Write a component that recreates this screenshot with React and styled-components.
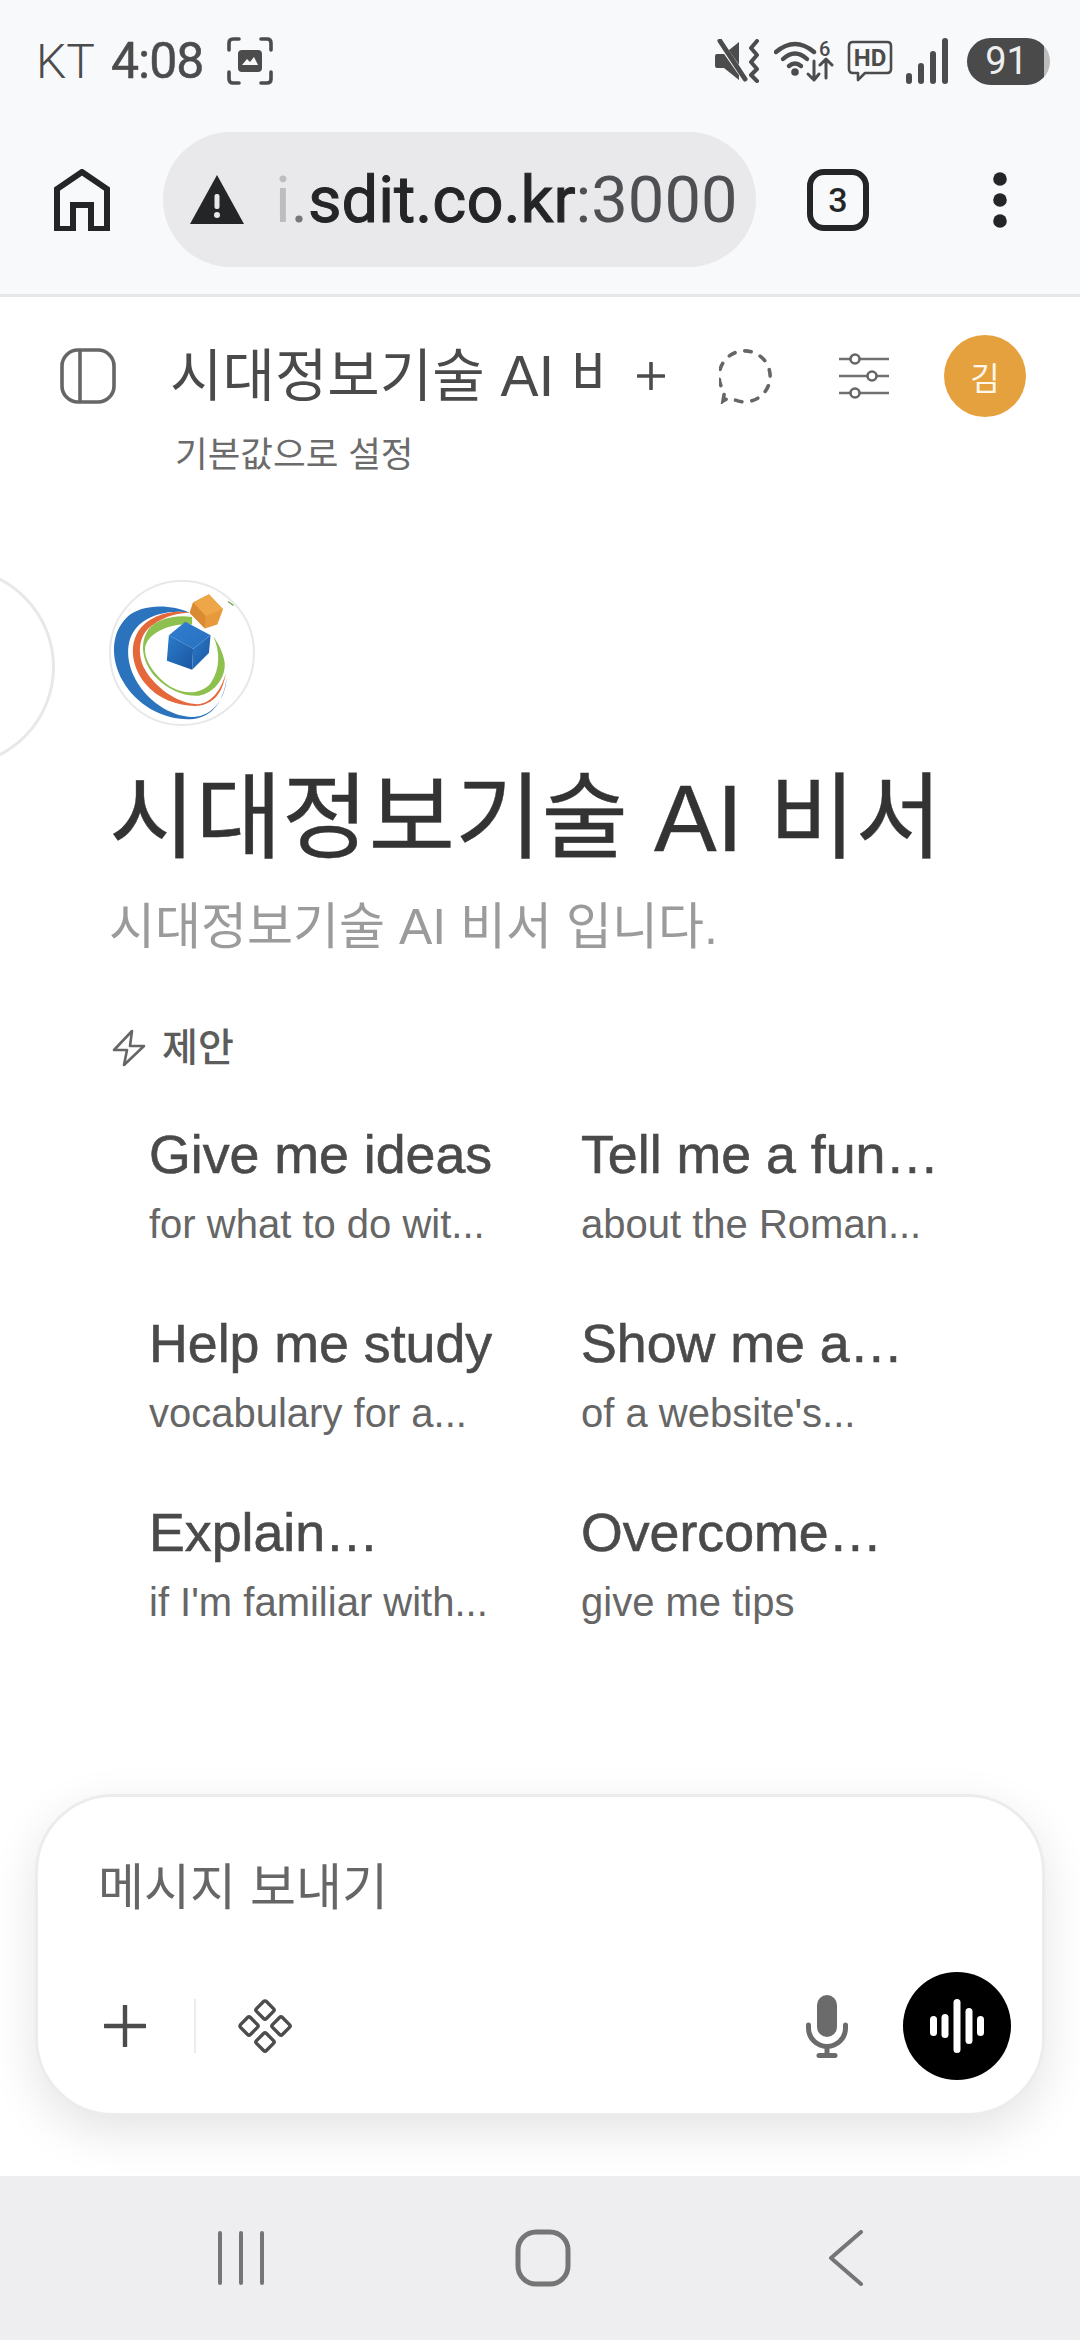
import React from 'react';
import styled, { createGlobalStyle } from 'styled-components';

const GlobalStyle = createGlobalStyle`
  * { box-sizing: border-box; }
  html, body { margin: 0; padding: 0; background: #fff; }
  body { font-family: "Liberation Sans", "Noto Sans CJK KR", sans-serif; }
`;

const suggestions = [
  { title: 'Give me ideas', sub: 'for what to do wit...' },
  { title: 'Tell me a fun…', sub: 'about the Roman...' },
  { title: 'Help me study', sub: 'vocabulary for a...' },
  { title: 'Show me a…', sub: "of a website's..." },
  { title: 'Explain…', sub: "if I'm familiar with..." },
  { title: 'Overcome…', sub: 'give me tips' },
];

const Logo = () => (
  <svg width="146" height="146" viewBox="118 58 434 434">
    <defs>
      <linearGradient id="blueTop" x1="0" y1="0" x2="1" y2="1">
        <stop offset="0" stopColor="#2f7fce" />
        <stop offset="1" stopColor="#2a6fc0" />
      </linearGradient>
      <linearGradient id="blueSide" x1="0" y1="0" x2="1" y2="1">
        <stop offset="0" stopColor="#2a7ccb" />
        <stop offset="1" stopColor="#1b559f" />
      </linearGradient>
    </defs>
    <circle cx="335" cy="275" r="214" fill="#fff" stroke="#e8e8e8" strokeWidth="6" />
    <path d="M358 155 C300 130 215 128 170 170 C125 215 120 290 160 360 C200 430 280 475 360 472 C420 468 455 430 468 350 C462 415 425 462 370 465 C310 468 225 420 190 340 C165 280 170 220 215 185 C255 155 310 148 358 155 Z" fill="#2b74bd" />
    <path d="M358 155 C300 145 235 165 205 210 C175 260 190 320 225 365 C265 415 330 435 385 432 C425 425 455 400 465 335 C450 390 420 425 380 427 C320 425 250 375 220 315 C200 265 210 215 250 190 C285 165 325 155 358 155 Z" fill="#e4683a" />
    <path d="M365 168 C310 160 260 175 235 205 C205 250 220 310 260 350 C295 385 345 405 385 402 C430 395 465 350 462 305 C458 275 445 250 428 225 C448 270 450 320 420 365 C395 395 350 400 310 380 C265 355 225 305 225 265 C225 225 285 185 365 190 Z" fill="#8dc04e" />
    <polygon points="415,100 457,145 440,190 403,202 358,155 368,125" fill="#e79a3c" />
    <polygon points="415,100 457,145 405,165 368,125" fill="#eda648" />
    <polygon points="358,155 368,125 405,165 403,202" fill="#d98a33" />
    <polygon points="345,182 420,222 368,262 296,222" fill="url(#blueTop)" />
    <polygon points="296,222 368,262 365,325 290,298" fill="url(#blueSide)" />
    <polygon points="420,222 415,275 365,325 368,262" fill="url(#blueSide)" />
    <path d="M472 122 L488 134" stroke="#6aa84f" strokeWidth="4" />
  </svg>
);

const App = () => (
  <Page>
    <GlobalStyle />
    <Chrome>
      <StatusBar>
        <StatusLeft>
          <Carrier>KT</Carrier>
          <Clock>4:08</Clock>
          <svg width="46" height="48" viewBox="0 0 46 48" fill="none">
            <path d="M2 13 V6 Q2 2 6 2 H12 M34 2 H40 Q44 2 44 6 V13 M44 35 V42 Q44 46 40 46 H34 M12 46 H6 Q2 46 2 42 V35" stroke="#4c4c4c" strokeWidth="3.6" strokeLinecap="round" />
            <rect x="11" y="13" width="24" height="22" rx="4" fill="#4c4c4c" />
            <path d="M15 28 L20 22 L23 25 L27 20 L31 28 Z" fill="#f8f9fb" />
          </svg>
        </StatusLeft>
        <StatusRight>
          <svg width="47" height="44" viewBox="0 0 47 44" fill="none">
            <path d="M1 17 Q1 15 3 15 H10 L25 3 V41 L10 29 H3 Q1 29 1 27 Z" fill="#4c4c4c" />
            <path d="M4 1 L32 41" stroke="#f8f9fb" strokeWidth="6" />
            <path d="M6 2 L31 40" stroke="#4c4c4c" strokeWidth="5" strokeLinecap="round" />
            <path d="M43 2 L37 9 L43 16 L37 23 L43 30 L37 36 L43 42" stroke="#4c4c4c" strokeWidth="4" strokeLinecap="round" strokeLinejoin="round" />
          </svg>
          <svg width="60" height="44" viewBox="0 0 60 44" fill="none">
            <path d="M2 13 Q21 -3 40 13" stroke="#4c4c4c" strokeWidth="4.4" strokeLinecap="round" />
            <path d="M9 20 Q21 9 33 20" stroke="#4c4c4c" strokeWidth="4.4" strokeLinecap="round" />
            <path d="M15 27 Q21 22 27 27" stroke="#4c4c4c" strokeWidth="4.4" strokeLinecap="round" />
            <circle cx="21" cy="33" r="3.8" fill="#4c4c4c" />
            <WifiDigit x="45" y="17">6</WifiDigit>
            <path d="M40 22 V41 M34 35 L40 41 L45 35" stroke="#4c4c4c" strokeWidth="3" strokeLinecap="round" strokeLinejoin="round" />
            <path d="M52 39 V20 M46 26 L52 20 L58 26" stroke="#4c4c4c" strokeWidth="3" strokeLinecap="round" strokeLinejoin="round" />
          </svg>
          <svg width="46" height="42" viewBox="0 0 46 42" fill="none">
            <path d="M6 2 H40 Q44 2 44 6 V29 Q44 33 40 33 H18 L11 40 V33 H6 Q2 33 2 29 V6 Q2 2 6 2 Z" stroke="#4c4c4c" strokeWidth="2.6" strokeLinejoin="round" />
            <HdMark x="23" y="26">HD</HdMark>
          </svg>
          <svg width="42" height="46" viewBox="0 0 42 46">
            <rect x="0" y="35" width="6" height="11" rx="3" fill="#4c4c4c" />
            <rect x="12" y="25" width="6" height="21" rx="3" fill="#4c4c4c" />
            <rect x="24" y="13" width="6" height="33" rx="3" fill="#4c4c4c" />
            <rect x="36" y="0" width="6" height="46" rx="3" fill="#4c4c4c" />
          </svg>
          <Battery>91</Battery>
        </StatusRight>
      </StatusBar>
      <ToolBar>
        <svg width="56" height="62" viewBox="0 0 56 62" fill="none">
          <path d="M3 60 V20 L28 3 L53 20 V60 H37 V36 H19 V60 Z" stroke="#242527" strokeWidth="6" />
        </svg>
        <UrlPill>
          <svg width="54" height="49" viewBox="0 0 54 49">
            <path d="M27 0 L54 49 H0 Z" fill="#242527" />
            <rect x="24.5" y="19" width="5" height="15" rx="2" fill="#e9e9eb" />
            <circle cx="27" cy="40" r="3" fill="#e9e9eb" />
          </svg>
          <UrlText>
            <UrlFade>i</UrlFade>
            <UrlDot>.</UrlDot>
            <UrlHost>sdit.co.kr</UrlHost>
            <UrlPort>:3000</UrlPort>
          </UrlText>
        </UrlPill>
        <TabCount>3</TabCount>
        <svg width="16" height="56" viewBox="0 0 16 56">
          <circle cx="8" cy="7" r="6.8" fill="#242527" />
          <circle cx="8" cy="28" r="6.8" fill="#242527" />
          <circle cx="8" cy="49" r="6.8" fill="#242527" />
        </svg>
      </ToolBar>
    </Chrome>

    <Main>
      <EdgeCircle />
      <HeaderRow>
        <PanelIcon>
          <svg width="56" height="56" viewBox="0 0 56 56" fill="none">
            <rect x="2" y="2" width="52" height="52" rx="16" stroke="#666" strokeWidth="3.6" />
            <path d="M20 2 V54" stroke="#666" strokeWidth="3.6" />
          </svg>
        </PanelIcon>
        <ModelTitle>시대정보기술 AI 비서</ModelTitle>
        <HeaderPlus>
          <svg width="28" height="28" viewBox="0 0 28 28">
            <path d="M14 1 V27 M1 14 H27" stroke="#4c4c4c" strokeWidth="3.6" strokeLinecap="round" />
          </svg>
        </HeaderPlus>
        <HeaderIcons>
          <svg width="56" height="56" viewBox="0 0 56 56" fill="none">
            <path d="M4 53 L5.5 44 A25.5 25.5 0 1 1 13 50.5 Q8 50 4 53 Z" stroke="#666" strokeWidth="3.6" strokeDasharray="6.5 10" strokeLinecap="round" />
          </svg>
          <svg width="50" height="46" viewBox="0 0 50 46" fill="none">
            <path d="M0 6 H50 M0 23 H50 M0 40 H50" stroke="#707070" strokeWidth="2.6" />
            <circle cx="16" cy="6" r="4.5" fill="#fff" stroke="#666" strokeWidth="2.6" />
            <circle cx="33" cy="23" r="4.5" fill="#fff" stroke="#666" strokeWidth="2.6" />
            <circle cx="16" cy="40" r="4.5" fill="#fff" stroke="#666" strokeWidth="2.6" />
          </svg>
          <Avatar>김</Avatar>
        </HeaderIcons>
      </HeaderRow>
      <SetDefault>기본값으로 설정</SetDefault>

      <Welcome>
        <Logo />
        <BigTitle>시대정보기술 AI 비서</BigTitle>
        <BigSub>시대정보기술 AI 비서 입니다.</BigSub>
        <SuggestLabel>
          <svg width="34" height="38" viewBox="-2 -2 34 38" fill="none">
            <path d="M18 0 L0 19 H13 L10 34 L30 15 H16 Z" stroke="#666" strokeWidth="2.6" strokeLinejoin="round" />
          </svg>
          제안
        </SuggestLabel>
      </Welcome>

      <SuggestGrid>
        {suggestions.map((item) => (
          <SuggestCard key={item.title}>
            <SuggestTitle>{item.title}</SuggestTitle>
            <SuggestSub>{item.sub}</SuggestSub>
          </SuggestCard>
        ))}
      </SuggestGrid>

      <Composer>
        <Placeholder>메시지 보내기</Placeholder>
        <ComposerTools>
          <ToolsLeft>
            <svg width="42" height="42" viewBox="0 0 42 42">
              <path d="M21 1 V41 M1 21 H41" stroke="#4c4c4c" strokeWidth="4.4" strokeLinecap="round" />
            </svg>
            <ToolDivider />
            <svg width="54" height="54" viewBox="0 0 54 54" fill="none">
              <rect x="20" y="4" width="14" height="14" rx="2" transform="rotate(45 27 11)" stroke="#4c4c4c" strokeWidth="3.4" />
              <rect x="4" y="20" width="14" height="14" rx="2" transform="rotate(45 11 27)" stroke="#4c4c4c" strokeWidth="3.4" />
              <rect x="36" y="20" width="14" height="14" rx="2" transform="rotate(45 43 27)" stroke="#4c4c4c" strokeWidth="3.4" />
              <rect x="20" y="36" width="14" height="14" rx="2" transform="rotate(45 27 43)" stroke="#4c4c4c" strokeWidth="3.4" />
            </svg>
          </ToolsLeft>
          <ToolsRight>
            <svg width="42" height="63" viewBox="0 0 42 63" fill="none">
              <rect x="11" y="0" width="20" height="42" rx="10" fill="#6b6b6b" />
              <path d="M2.5 30 V33 A18.5 18.5 0 0 0 39.5 33 V30" stroke="#6b6b6b" strokeWidth="5" strokeLinecap="round" />
              <path d="M21 52 V60" stroke="#6b6b6b" strokeWidth="5" />
              <path d="M13 60.5 H29" stroke="#6b6b6b" strokeWidth="5" strokeLinecap="round" />
            </svg>
            <VoiceButton>
              <svg width="54" height="54" viewBox="0 0 54 54">
                <rect x="0" y="17" width="7" height="20" rx="3.5" fill="#fff" />
                <rect x="11.5" y="15" width="7" height="24" rx="3.5" fill="#fff" />
                <rect x="23.5" y="0" width="7" height="54" rx="3.5" fill="#fff" />
                <rect x="35.5" y="9" width="7" height="36" rx="3.5" fill="#fff" />
                <rect x="47" y="17" width="7" height="20" rx="3.5" fill="#fff" />
              </svg>
            </VoiceButton>
          </ToolsRight>
        </ComposerTools>
      </Composer>
    </Main>

    <NavBar>
      <svg width="50" height="54" viewBox="0 0 50 54">
        <path d="M4 2 V52 M25 2 V52 M46 2 V52" stroke="#757575" strokeWidth="4" strokeLinecap="round" />
      </svg>
      <svg width="64" height="58" viewBox="0 0 64 58" fill="none">
        <rect x="3" y="3" width="50" height="52" rx="18" stroke="#757575" strokeWidth="5" />
      </svg>
      <svg width="36" height="56" viewBox="0 0 36 56" fill="none">
        <path d="M33 2 L3 28 L33 54" stroke="#757575" strokeWidth="4" strokeLinecap="round" strokeLinejoin="round" />
      </svg>
    </NavBar>
  </Page>
);

export default App;

const Page = styled.div`
  width: 1080px;
  height: 2340px;
  display: flex;
  flex-direction: column;
  overflow: hidden;
  background: #fff;
`;

const Chrome = styled.header`
  background: #f8f9fb;
  border-bottom: 3px solid #e6e7e9;
`;

const StatusBar = styled.div`
  height: 122px;
  padding: 0 30px 0 36px;
  display: flex;
  justify-content: space-between;
  align-items: center;
`;

const StatusLeft = styled.div`
  display: flex;
  align-items: center;
  color: #4c4c4c;
  font-family: Roboto, sans-serif;
`;

const Carrier = styled.span`
  font-size: 48px;
  font-weight: 300;
  margin-right: 16px;
`;

const Clock = styled.span`
  font-size: 50px;
  font-weight: 400;
  -webkit-text-stroke: 0.5px #4c4c4c;
  letter-spacing: -1px;
  margin-right: 24px;
`;

const StatusRight = styled.div`
  display: flex;
  align-items: center;
  gap: 13px;
`;

const WifiDigit = styled.text`
  font: 500 20px Roboto, sans-serif;
  fill: #4c4c4c;
`;

const HdMark = styled.text`
  font: 700 24px Roboto, sans-serif;
  fill: #4c4c4c;
  text-anchor: middle;
`;

const Battery = styled.div`
  width: 83px;
  height: 47px;
  margin-left: 6px;
  border-radius: 24px;
  background: linear-gradient(to right, #4a4a4a 93%, #bcbcbc 93%);
  color: #eee;
  font: 400 38px Roboto, sans-serif;
  display: flex;
  align-items: center;
  justify-content: center;
  padding-right: 4px;
`;

const ToolBar = styled.div`
  height: 172px;
  padding: 0 72px 17px 54px;
  display: flex;
  align-items: center;
`;

const UrlPill = styled.div`
  width: 593px;
  height: 135px;
  margin-left: 53px;
  padding-left: 27px;
  border-radius: 68px;
  background: #e9e9eb;
  display: flex;
  align-items: center;
  gap: 31px;
`;

const UrlText = styled.div`
  font: 400 65px Roboto, sans-serif;
  color: #242527;
  white-space: nowrap;
`;

const UrlFade = styled.span`
  color: #bdbdbf;
`;

const UrlDot = styled.span`
  color: #77777a;
`;

const UrlHost = styled.span`
  -webkit-text-stroke: 1px #242527;
`;

const UrlPort = styled.span`
  color: #4e4f53;
`;

const TabCount = styled.div`
  width: 62px;
  height: 62px;
  margin-left: 51px;
  margin-right: auto;
  border: 6px solid #242527;
  border-radius: 17px;
  color: #242527;
  font: 500 34px Roboto, sans-serif;
  display: flex;
  align-items: center;
  justify-content: center;
`;

const Main = styled.main`
  position: relative;
  flex: 1;
  display: flex;
  flex-direction: column;
  background: #fff;
`;

const EdgeCircle = styled.div`
  position: absolute;
  left: -145px;
  top: 270px;
  width: 200px;
  height: 200px;
  border: 3px solid #e8e8e8;
  border-radius: 50%;
`;

const HeaderRow = styled.div`
  height: 82px;
  margin-top: 38px;
  padding: 0 54px 0 60px;
  display: flex;
  align-items: center;
`;

const PanelIcon = styled.div`
  display: flex;
  width: 110px;
  flex: none;
`;

const ModelTitle = styled.div`
  width: 431px;
  flex: none;
  overflow: hidden;
  white-space: nowrap;
  font-size: 57px;
  line-height: 70px;
  color: #4a4a4a;
`;

const HeaderPlus = styled.div`
  display: flex;
  margin-left: 36px;
`;

const HeaderIcons = styled.div`
  display: flex;
  align-items: center;
  margin-left: auto;
  gap: 64px;
`;

const Avatar = styled.div`
  width: 82px;
  height: 82px;
  margin-left: -9px;
  border-radius: 50%;
  background: #e6a13f;
  color: #fff8ea;
  font-size: 32px;
  display: flex;
  align-items: center;
  justify-content: center;
`;

const SetDefault = styled.div`
  margin: 18px 0 0 175px;
  font-size: 35.5px;
  line-height: 40px;
  color: #6b6b6b;
`;

const Welcome = styled.section`
  margin-top: 105px;
  padding-left: 109px;
  display: flex;
  flex-direction: column;
  align-items: flex-start;
`;

const BigTitle = styled.h1`
  margin: 43px 0 0;
  font-size: 94px;
  line-height: 100px;
  font-weight: 400;
  color: #333;
  -webkit-text-stroke: 0.4px #333;
`;

const BigSub = styled.div`
  margin-top: 28px;
  font-size: 50px;
  line-height: 60px;
  color: #9b9b9b;
`;

const SuggestLabel = styled.div`
  margin-top: 69px;
  padding-left: 3px;
  display: flex;
  align-items: center;
  gap: 16px;
  font-size: 39px;
  line-height: 44px;
  font-weight: 500;
  color: #5c5c5c;
`;

const SuggestGrid = styled.div`
  margin-top: 54px;
  padding-left: 149px;
  display: grid;
  grid-template-columns: 432px 431px;
  row-gap: 64px;
`;

const SuggestCard = styled.div`
  display: flex;
  flex-direction: column;
  gap: 15px;
`;

const SuggestTitle = styled.div`
  font-size: 53.7px;
  line-height: 60px;
  color: #4a4a4a;
  -webkit-text-stroke: 0.6px #4a4a4a;
  white-space: nowrap;
`;

const SuggestSub = styled.div`
  font-size: 40px;
  line-height: 50px;
  color: #666;
  white-space: nowrap;
`;

const Composer = styled.div`
  height: 322px;
  margin: auto 35px 60px;
  padding: 61px 31px 0 60px;
  background: #fff;
  border: 3px solid #ececec;
  border-radius: 78px;
  box-shadow: 0 16px 48px rgba(0, 0, 0, 0.11);
`;

const Placeholder = styled.div`
  font-size: 50px;
  line-height: 60px;
  color: #666;
`;

const ComposerTools = styled.div`
  height: 108px;
  margin-top: 54px;
  display: flex;
  justify-content: space-between;
  align-items: center;
`;

const ToolsLeft = styled.div`
  display: flex;
  align-items: center;
  padding-left: 6px;
`;

const ToolDivider = styled.div`
  width: 2px;
  height: 54px;
  margin: 0 42px 0 48px;
  background: #ececec;
`;

const ToolsRight = styled.div`
  display: flex;
  align-items: center;
  gap: 55px;
`;

const VoiceButton = styled.div`
  width: 108px;
  height: 108px;
  border-radius: 50%;
  background: #000;
  display: flex;
  align-items: center;
  justify-content: center;
`;

const NavBar = styled.nav`
  height: 164px;
  flex: none;
  position: relative;
  background: #eeeef0;
  padding: 0 216px 0 216px;
  display: flex;
  justify-content: space-between;
  align-items: center;
`;
